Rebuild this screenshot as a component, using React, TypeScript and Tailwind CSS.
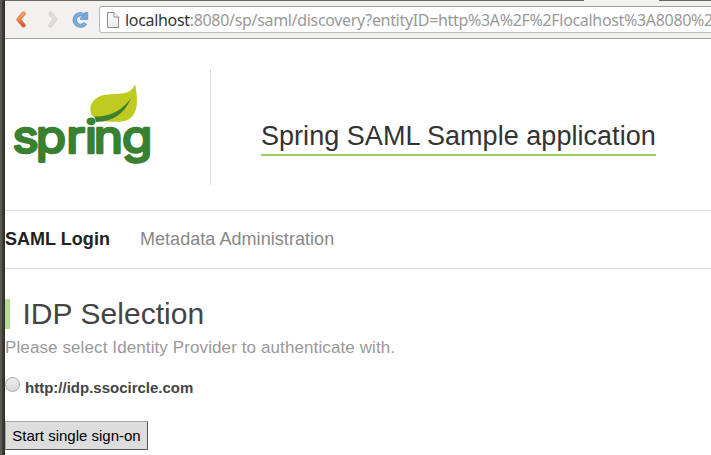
function BackIcon() {
  return (
    <svg width="12" height="18" viewBox="0 0 12 18" className="shrink-0">
      <defs>
        <linearGradient id="back" gradientUnits="userSpaceOnUse" x1="0" y1="1" x2="0" y2="17">
          <stop offset="0" stopColor="#f2b27c" />
          <stop offset="0.5" stopColor="#ec8a50" />
          <stop offset="1" stopColor="#e0481a" />
        </linearGradient>
      </defs>
      <path d="M8.5 3.6 L3.6 9.5 L8.5 15.4" fill="none" stroke="#dc6a35" strokeWidth="4.2" strokeLinejoin="round" strokeLinecap="round" />
      <path d="M8.5 3.6 L3.6 9.5 L8.5 15.4" fill="none" stroke="url(#back)" strokeWidth="3" strokeLinejoin="round" strokeLinecap="round" />
    </svg>
  );
}

function ForwardIcon() {
  return (
    <svg width="12" height="18" viewBox="0 0 12 18" className="shrink-0">
      <path d="M3.4 3.6 L8.3 9.5 L3.4 15.4" fill="none" stroke="#cfcdcb" strokeWidth="4" strokeLinejoin="round" strokeLinecap="round" />
      <path d="M3.4 3.6 L8.3 9.5 L3.4 15.4" fill="none" stroke="#dedcda" strokeWidth="3" strokeLinejoin="round" strokeLinecap="round" />
    </svg>
  );
}

function ReloadIcon() {
  return (
    <svg width="18" height="18" viewBox="0 0 18 18" className="shrink-0">
      <path d="M12.1 5.4 A5.9 5.7 0 1 0 13.4 13.3" fill="none" stroke="#5b92c9" strokeWidth="4.2" />
      <path d="M12.1 5.4 A5.9 5.7 0 1 0 13.4 13.3" fill="none" stroke="#7caedd" strokeWidth="2.8" />
      <path d="M15.8 2.5 V9.5 H8.4 V7.9 L11 5.9 L13 2.5 Z" fill="#75a7d8" stroke="#5b92c9" strokeWidth="0.7" />
    </svg>
  );
}

function PageIcon() {
  return (
    <svg width="12" height="16" viewBox="0 0 12 16" className="shrink-0">
      <defs>
        <linearGradient id="page" x1="0" y1="0" x2="0" y2="1">
          <stop offset="0" stopColor="#ffffff" />
          <stop offset="1" stopColor="#e9e9e9" />
        </linearGradient>
      </defs>
      <path d="M0.5 0.5 H7 L11.5 5 V15.5 H0.5 Z" fill="url(#page)" stroke="#8b8b8b" />
      <path d="M7 0.5 V5 H11.5" fill="#fff" stroke="#8b8b8b" />
    </svg>
  );
}

function SpringLogo() {
  return (
    <svg width="150" height="90" viewBox="5 80 150 90" className="block">
      <path d="M135 84 C132 93 124 94 110 94.2 C98 94.5 90 101 90.3 110 C90.5 114 92.5 117 95.5 119 C101 122 112 122 122 121.5 C132 120.5 137 112 137 101 C137 94 136 89 135 84 Z" fill="#bfcb21" />
      <path d="M94.2 116.4 C110 117 122 111 131 98 C125 113 114 121.5 96 122 L95.4 119.5 Z" fill="#398030" />
      <circle cx="90" cy="120" r="5" fill="#fff" />
      <text transform="scale(1.1 1)" x="11.3 32.6 60.3 77.2 85.3 110.9" y="153.2" fontFamily="Inter, sans-serif" fontWeight="400" fontSize="45" fill="#398030" stroke="#398030" strokeWidth="2.6" strokeLinejoin="round">
        spring
      </text>
    </svg>
  );
}

export default function App() {
  return (
    <div className="flex h-[455px] w-[711px] overflow-hidden bg-[#3c3a35] font-['Liberation_Sans',Arial,sans-serif]">
      <div className="w-[5px] shrink-0 border-l-2 border-r border-l-[#5a5852] border-r-[#302d28]" />
      <div className="flex min-w-0 flex-1 flex-col bg-white">
        <div className="flex h-px shrink-0 bg-[#6b6767]">
          <div className="ml-[579px] w-[75px] bg-[#f2f1f0]" />
        </div>
        <header className="flex h-[38px] shrink-0 items-start rounded-tl-sm border-b border-[#a3a3a3] bg-[#f2f1f0] pl-[10px]">
          <div className="flex pt-[9px]">
            <BackIcon />
            <div className="w-5" />
            <ForwardIcon />
            <div className="w-[13px]" />
            <ReloadIcon />
          </div>
          <div className="ml-[9px] mt-[5px] flex h-[27px] w-[640px] shrink-0 items-center rounded-[3px] border border-[#b9b9b9] border-t-[#a0a0a0] bg-white pl-[7px]">
            <PageIcon />
            <div className="ml-[6px] whitespace-nowrap font-['Noto_Sans',sans-serif] text-[16px] leading-[24px] tracking-[-0.32px] text-[#999]">
              <span className="text-[#333]">localhost</span>:8080/sp/saml/discovery?entityID=http%3A%2F%2Flocalhost%3A8080%2
            </div>
          </div>
        </header>

        <section className="flex h-[172px] shrink-0 items-start border-b border-[#ddd]">
          <div className="mt-[30px] flex h-[116px] w-[206px] shrink-0 border-r border-[#ddd] pt-[11px]">
            <SpringLogo />
          </div>
          <h1 className="ml-[50px] mt-[80px] h-[37px] whitespace-nowrap border-b-2 border-[#99cc66] text-[27px] leading-[34px] tracking-[0.035px] text-[#333]">
            Spring SAML Sample application
          </h1>
        </section>

        <nav className="flex h-[58px] shrink-0 items-center gap-[30px] border-b border-[#ddd] text-[18px]">
          <a className="font-bold tracking-[0.03px] text-[#222]">SAML Login</a>
          <a className="tracking-[0.05px] text-[#888]">Metadata Administration</a>
        </nav>

        <main className="flex flex-col items-start pt-[30px]">
          <h2 className="h-[30px] border-l-[5px] border-[#b8da96] pl-[12.5px] text-[30px] leading-[30px] tracking-[0.04px] text-[#444]">IDP Selection</h2>
          <p className="mt-[9px] text-[17px] leading-[20px] tracking-[0.105px] text-[#999]">Please select Identity Provider to authenticate with.</p>
          <label className="mt-[19px] flex h-[20px] items-start text-[15px] font-bold leading-[20px] text-[#444]">
            <span className="mr-[5px] h-[15px] w-[15px] rounded-full border border-[#a6a6a6] bg-linear-to-b from-[#eee] to-[#d8d8d8]" />
            <span className="pt-px">http://idp.ssocircle.com</span>
          </label>
          <button className="mt-[24px] h-[29px] w-[143px] whitespace-nowrap border border-b-[#555] border-l-[#aaa] border-r-[#555] border-t-[#aaa] bg-[#ddd] pt-px text-[15px] text-black">
            Start single sign-on
          </button>
        </main>
      </div>
    </div>
  );
}
